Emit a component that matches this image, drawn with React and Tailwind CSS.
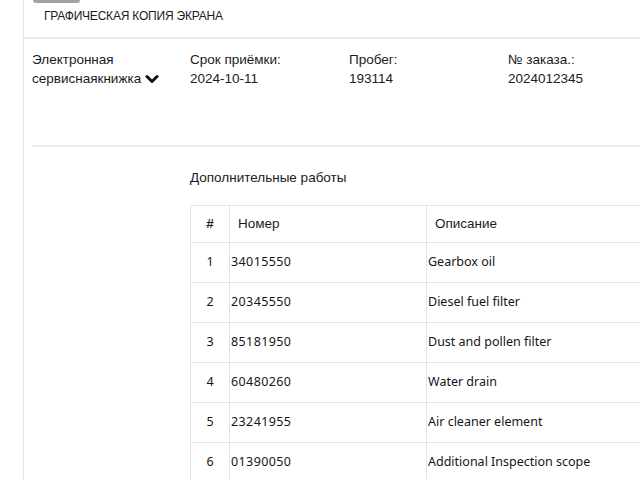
export default function App() {
  const rows = [
    ["1", "34015550", "Gearbox oil"],
    ["2", "20345550", "Diesel fuel filter"],
    ["3", "85181950", "Dust and pollen filter"],
    ["4", "60480260", "Water drain"],
    ["5", "23241955", "Air cleaner element"],
    ["6", "01390050", "Additional Inspection scope"],
  ];
  const info = [
    ["Срок приёмки:", "2024-10-11"],
    ["Пробег:", "193114"],
    ["№ заказа.:", "2024012345"],
  ];
  return (
    <div className="w-[640px] h-[480px] overflow-hidden bg-white text-[#1b1b1b] font-['Liberation_Sans',Arial,sans-serif]">
      <div className="ml-[23px] h-full border-l border-[#e6e6e6]">
        <div className="h-[39px] border-b-2 border-[#ececec]">
          <div className="ml-[9px] h-[3px] w-[47px] rounded-b-[3px] bg-[#a3a3a3]" />
          <div className="pl-[20px] pt-[5px] text-[12px] leading-[16px] tracking-[-0.2px]">ГРАФИЧЕСКАЯ КОПИЯ ЭКРАНА</div>
        </div>
        <div className="pl-2">
          <div className="flex h-[108px] border-b-2 border-[#ededed] pt-[11px] text-[13.5px] leading-[19px]">
            <div className="w-[158px] shrink-0">
              <div>Электронная</div>
              <div className="flex items-center">
                сервиснаякнижка
                <svg className="ml-[4px] mt-[1px]" width="14" height="10" viewBox="0 0 14 10">
                  <path d="M2 2.5 L7 7.5 L12 2.5" fill="none" stroke="#111" strokeWidth="3" strokeLinecap="round" strokeLinejoin="round" />
                </svg>
              </div>
            </div>
            {info.map(([l, v]) => (
              <div key={l} className="w-[159px] shrink-0">
                <div>{l}</div>
                <div>{v}</div>
              </div>
            ))}
          </div>
          <div className="ml-[158px]">
            <div className="pt-[21px] text-[13.5px] leading-[19px]">Дополнительные работы</div>
            <table className="mt-[18px] w-[600px] border-collapse text-[13.5px]">
              <thead>
                <tr className="h-[37px]">
                  <th className="w-[39px] border border-[#e3e3e3] text-center font-bold">#</th>
                  <th className="w-[197px] border border-[#e3e3e3] pl-[8px] text-left font-normal">Номер</th>
                  <th className="border border-[#e3e3e3] pl-[8px] text-left font-normal">Описание</th>
                </tr>
              </thead>
              <tbody className="font-['Noto_Sans',sans-serif] text-[12.5px] text-[#161616]">
                {rows.map(([n, num, d]) => (
                  <tr key={n} className="h-[40px]">
                    <td className="border border-[#e3e3e3] text-center">{n}</td>
                    <td className="border border-[#e3e3e3] pl-[1px] tracking-[0.4px]">{num}</td>
                    <td className="border border-[#e3e3e3] pl-[1px]">{d}</td>
                  </tr>
                ))}
              </tbody>
            </table>
          </div>
        </div>
      </div>
    </div>
  );
}
